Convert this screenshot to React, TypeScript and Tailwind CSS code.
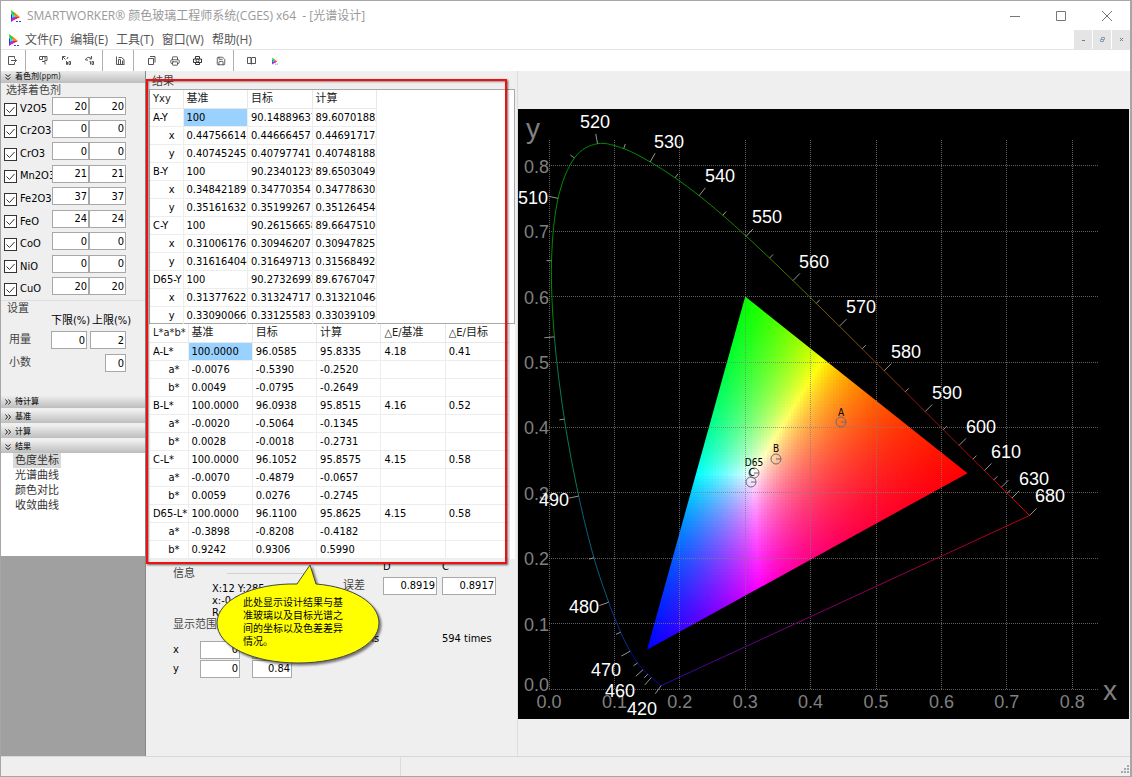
import React from 'react';
import { Printer, Save } from 'lucide-react';

const colorants = [
  { name: 'V2O5', low: '20', high: '20' },
  { name: 'Cr2O3', low: '0', high: '0' },
  { name: 'CrO3', low: '0', high: '0' },
  { name: 'Mn2O3', low: '21', high: '21' },
  { name: 'Fe2O3', low: '37', high: '37' },
  { name: 'FeO', low: '24', high: '24' },
  { name: 'CoO', low: '0', high: '0' },
  { name: 'NiO', low: '0', high: '0' },
  { name: 'CuO', low: '20', high: '20' },
];

const yxyRows = [
  ['A-Y', '100', '90.14889637', '89.60701882'],
  ['x', '0.447566145', '0.44666457', '0.446917178'],
  ['y', '0.407452452', '0.40797741', '0.407481883'],
  ['B-Y', '100', '90.23401239', '89.65030493'],
  ['x', '0.348421893', '0.34770354', '0.347786305'],
  ['y', '0.351616327', '0.35199267', '0.351264546'],
  ['C-Y', '100', '90.26156658', '89.66475106'],
  ['x', '0.310061762', '0.30946207', '0.309478251'],
  ['y', '0.316164044', '0.31649713', '0.315684928'],
  ['D65-Y', '100', '90.27326993', '89.67670479'],
  ['x', '0.313776221', '0.31324717', '0.313210464'],
  ['y', '0.330900661', '0.33125583', '0.330391098'],
];

const labRows = [
  ['A-L*', '100.0000', '96.0585', '95.8335', '4.18', '0.41'],
  ['a*', '-0.0076', '-0.5390', '-0.2520', '', ''],
  ['b*', '0.0049', '-0.0795', '-0.2649', '', ''],
  ['B-L*', '100.0000', '96.0938', '95.8515', '4.16', '0.52'],
  ['a*', '-0.0020', '-0.5064', '-0.1345', '', ''],
  ['b*', '0.0028', '-0.0018', '-0.2731', '', ''],
  ['C-L*', '100.0000', '96.1052', '95.8575', '4.15', '0.58'],
  ['a*', '-0.0070', '-0.4879', '-0.0657', '', ''],
  ['b*', '0.0059', '0.0276', '-0.2745', '', ''],
  ['D65-L*', '100.0000', '96.1100', '95.8625', '4.15', '0.58'],
  ['a*', '-0.3898', '-0.8208', '-0.4182', '', ''],
  ['b*', '0.9242', '0.9306', '0.5990', '', ''],
];

// CIE 1931 spectral locus: wavelength, x, y
const locus: Array<[number, number, number]> = [
  [420, 0.1714, 0.0051], [430, 0.1689, 0.0069], [440, 0.1644, 0.0109], [450, 0.1566, 0.0177],
  [455, 0.151, 0.0227], [460, 0.144, 0.0297], [465, 0.1355, 0.0399], [470, 0.1241, 0.0578],
  [475, 0.1096, 0.0868], [480, 0.0913, 0.1327], [485, 0.0687, 0.2007], [490, 0.0454, 0.295],
  [495, 0.0235, 0.4127], [500, 0.0082, 0.5384], [505, 0.0039, 0.6548], [510, 0.0139, 0.7502],
  [515, 0.0389, 0.812], [520, 0.0743, 0.8338], [525, 0.1142, 0.8262], [530, 0.1547, 0.8059],
  [535, 0.1929, 0.7816], [540, 0.2296, 0.7543], [545, 0.2658, 0.7243], [550, 0.3016, 0.6923],
  [555, 0.3373, 0.6589], [560, 0.3731, 0.6245], [565, 0.4087, 0.5896], [570, 0.4441, 0.5547],
  [575, 0.4788, 0.5202], [580, 0.5125, 0.4866], [585, 0.5448, 0.4544], [590, 0.5752, 0.4242],
  [595, 0.6029, 0.3965], [600, 0.627, 0.3725], [605, 0.6482, 0.3514], [610, 0.6658, 0.334],
  [615, 0.6801, 0.3197], [620, 0.6915, 0.3083], [625, 0.7006, 0.2993], [630, 0.7079, 0.292],
  [680, 0.7347, 0.2653],
];

const waveLabels: Array<[string, number, number]> = [
  ['520', 77, 12], ['530', 151, 32], ['540', 202, 66], ['550', 249, 107], ['560', 296, 152],
  ['570', 343, 197], ['580', 388, 242], ['590', 429, 283], ['600', 463, 317], ['610', 488, 342],
  ['630', 516, 369], ['680', 532, 386], ['510', 15, 88], ['490', 36, 390], ['480', 66, 497],
  ['470', 88, 560], ['460', 102, 581], ['420', 124, 599],
];

const UNIT = 654;
const px = (x: number) => 31 + x * UNIT;
const py = (y: number) => 580 - y * UNIT;

const xyToColor = (x: number, y: number) => {
  const X = x / y;
  const Z = (1 - x - y) / y;
  const rgb = [
    3.2406 * X - 1.5372 - 0.4986 * Z,
    -0.9689 * X + 1.8758 + 0.0415 * Z,
    0.0557 * X - 0.204 + 1.057 * Z,
  ].map((v) => Math.max(0, v));
  const max = Math.max(...rgb);
  return `rgb(${rgb.map((v) => Math.round((v / max) * 255)).join(',')})`;
};

const gamut = [[0.3, 0.6], [0.64, 0.33], [0.15, 0.06]];
const gamutPoints = gamut.map(([x, y]) => `${px(x)},${py(y)}`).join(' ');

const CELL = 3;
const gamutCells: Array<{ x: number; y: number; fill: string }> = [];
for (let cy = 187; cy < 542; cy += CELL) {
  const y = (580 - cy - CELL / 2) / UNIT;
  const left = 0.15 + ((y - 0.06) / 0.54) * 0.15;
  const right = y > 0.33 ? 0.3 + ((0.6 - y) / 0.27) * 0.34 : 0.15 + ((y - 0.06) / 0.27) * 0.49;
  const start = Math.floor(px(left) / CELL) * CELL - 2 * CELL;
  for (let cx = start; cx < px(right) + 2 * CELL; cx += CELL) {
    gamutCells.push({ x: cx, y: cy, fill: xyToColor((cx + CELL / 2 - 31) / UNIT, Math.max(y, 0.01)) });
  }
}

const waveColor = (nm: number) => {
  if (nm < 475) return '#0808a0';
  if (nm < 485) return '#06348e';
  if (nm < 495) return '#08627a';
  if (nm < 505) return '#0a7a50';
  if (nm < 545) return '#008c00';
  if (nm < 560) return '#1f7f00';
  if (nm < 570) return '#4f7000';
  if (nm < 580) return '#7d5600';
  if (nm < 590) return '#8f3400';
  if (nm < 605) return '#961600';
  if (nm < 625) return '#b00a00';
  return '#e00000';
};

const steps = [0, 1, 2, 3, 4, 5, 6, 7, 8];

const markers = [
  { name: 'A', x: 323, y: 313, lx: 323, ly: 307 },
  { name: 'B', x: 258, y: 350, lx: 258, ly: 343 },
  { name: 'D65', x: 236, y: 364, lx: 236, ly: 357 },
  { name: 'C', x: 233, y: 373, lx: 234, ly: 367 },
];

const ChromaticityChart: React.FC = () => (
  <svg
    viewBox="0 0 611 610"
    className="block w-full bg-black font-['Liberation_Sans_Narrow','Liberation_Sans',sans-serif]"
    role="img"
    aria-label="CIE 1931"
  >
    <defs>
      <clipPath id="gamut">
        <polygon points={gamutPoints} />
      </clipPath>
      <linearGradient id="purple" x1="0" x2="1">
        <stop offset="0" stopColor="#2a0aa8" />
        <stop offset="0.35" stopColor="#760078" />
        <stop offset="1" stopColor="#b80010" />
      </linearGradient>
    </defs>
    <g clipPath="url(#gamut)" shapeRendering="crispEdges">
      {gamutCells.map((c) => (
        <rect key={`${c.x}-${c.y}`} x={c.x} y={c.y} width={CELL} height={CELL} fill={c.fill} />
      ))}
    </g>

    {/* Grid */}
    <g stroke="#808080" strokeOpacity="0.75" strokeDasharray="1 1" shapeRendering="crispEdges">
      {steps.map((s) => (
        <React.Fragment key={s}>
          <line x1={px(s / 10)} x2={px(s / 10)} y1="31" y2="580" />
          <line x1="31" x2="580" y1={py(s / 10)} y2={py(s / 10)} />
        </React.Fragment>
      ))}
    </g>

    {/* Axis labels */}
    <g fill="#808080" fontSize="18">
      {steps.map((s) => (
        <React.Fragment key={s}>
          <text x={px(s / 10)} y="599" textAnchor="middle">{`0.${s}`}</text>
          <text x="31" y={s === 0 ? 582 : py(s / 10) + 7} textAnchor="end">{`0.${s}`}</text>
        </React.Fragment>
      ))}
    </g>
    <g fill="#808080" fontSize="28" textAnchor="middle">
      <text x="15" y="29">y</text>
      <text x="592" y="591">x</text>
    </g>

    {/* Spectral locus with its ticks */}
    {locus.slice(1).map(([nm, x, y], i) => {
      const prev = locus[i];
      const before = locus[Math.max(0, i - 1)];
      const next = locus[Math.min(locus.length - 1, i + 2)];
      const c1x = px(prev[1] + (x - before[1]) / 6);
      const c1y = py(prev[2] + (y - before[2]) / 6);
      const c2x = px(x - (next[1] - prev[1]) / 6);
      const c2y = py(y - (next[2] - prev[2]) / 6);
      return (
        <path
          key={nm}
          d={`M${px(prev[1])} ${py(prev[2])}C${c1x} ${c1y} ${c2x} ${c2y} ${px(x)} ${py(y)}`}
          fill="none"
          stroke={waveColor(nm)}
        />
      );
    })}
    <line x1={px(0.1714)} y1={py(0.0051)} x2={px(0.7347)} y2={py(0.2653)} stroke="url(#purple)" />
    <g stroke="#949494">
      {locus.map(([nm, x, y], i) => {
        if (nm === 430 || nm === 440) return null;
        const a = locus[Math.max(0, i - 1)];
        const b = locus[Math.min(locus.length - 1, i + 1)];
        const tx = b[1] - a[1];
        const ty = -(b[2] - a[2]);
        const len = (nm % 10 === 0 ? 10 : 5) / Math.hypot(tx, ty);
        return <line key={nm} x1={px(x)} y1={py(y)} x2={px(x) + ty * len} y2={py(y) - tx * len} />;
      })}
    </g>
    <g fill="#fff" fontSize="18" textAnchor="middle">
      {waveLabels.map(([t, x, y]) => (
        <text key={t} x={x} y={y + 7}>{t}</text>
      ))}
    </g>

    {/* Illuminants */}
    {markers.map((m) => (
      <g key={m.name}>
        <circle cx={m.x} cy={m.y} r="5" fill="none" stroke="#6b6b70" />
        <path d={`M${m.x} ${m.y}h5`} stroke="#6b6b70" />
        <text
          x={m.lx}
          y={m.ly}
          textAnchor="middle"
          className="font-['DejaVu_Sans_Condensed','DejaVu_Sans',sans-serif] text-[10px]"
        >
          {m.name}
        </text>
      </g>
    ))}
  </svg>
);

const Logo: React.FC<{ className: string }> = ({ className }) => (
  <svg viewBox="0 0 14 14" className={className} aria-hidden="true">
    <path d="M2 1l5 4-4 4z" fill="#18d028" />
    <path d="M5 3l6 5-5 1z" fill="#f08a10" />
    <path d="M11 8l-6 3 1-3z" fill="#f01040" />
    <path d="M2 5l4 3-4 5z" fill="#2030f0" />
    <path d="M3 4l3 4-3 1z" fill="#30e0e0" />
    <path d="M3 9l4-1 1 1-6 4z" fill="#c020e0" />
    <path d="M7 12.500h6" stroke="#3848c0" strokeDasharray="2 1" />
  </svg>
);

const ToolButton: React.FC<{ label: string; children: React.ReactNode }> = ({ label, children }) => (
  <button aria-label={label} className="flex h-full w-[23px] items-center justify-center text-[#444]">
    {children}
  </button>
);

const ToolIcon: React.FC<{ d: string }> = ({ d }) => (
  <svg viewBox="0 0 9 9" className="size-[9px]" fill="none" stroke="#555" aria-hidden="true">
    <path d={d} />
  </svg>
);

const ToolSeparator = () => <div className="ml-px mr-1.5 h-full w-px bg-[#b0b0b0]" />;

const NumberBox: React.FC<{ label: string; value: string; className: string }> = ({ label, value, className }) => (
  <input
    aria-label={label}
    defaultValue={value}
    className={`h-[18px] border border-[#a8a8a8] bg-white px-px text-right outline-none ${className}`}
  />
);

const SectionBar: React.FC<{ title: string; open?: boolean }> = ({ title, open }) => (
  <button className="flex h-3 w-full shrink-0 items-center gap-1 bg-linear-to-b from-[#ececec] to-[#bdbdbd] px-1 text-[8px] font-medium leading-none text-[#222]">
    <svg viewBox="0 0 6 6" className={open ? 'size-1.5 rotate-90' : 'size-1.5'} aria-hidden="true">
      <path d="M0.5 0.5l2 2.5-2 2.5M3.5 0.5l2 2.5-2 2.5" fill="none" stroke="#222" />
    </svg>
    {title}
  </button>
);

interface ResultTableProps {
  head: string[];
  rows: string[][];
  firstWidth: string;
  width: string;
}

const ResultTable: React.FC<ResultTableProps> = ({ head, rows, firstWidth, width }) => (
  <table className={`table-fixed border-collapse ${width}`}>
    <thead>
      <tr className="h-[18px]">
        {head.map((h, i) => (
          <th
            key={h}
            scope="col"
            className={`overflow-hidden whitespace-nowrap border-b border-r border-[#e8e8e8] p-0 pl-[3px] text-left font-normal leading-[17px] text-[#222] ${i === 0 ? firstWidth : ''}`}
          >
            {h}
          </th>
        ))}
      </tr>
    </thead>
    <tbody>
      {rows.map((row, r) => (
        <tr key={r} className="h-[18px]">
          {row.map((cell, i) => (
            <td
              key={i}
              className={`overflow-hidden whitespace-nowrap border-b border-r border-[#ededed] p-0 leading-[17px] ${
                i === 0 && r % 3 !== 0 ? 'pr-2 text-right' : 'pl-[3px]'
              } ${r === 0 && i === 1 ? 'bg-[#99d1ff]' : ''}`}
            >
              {cell}
            </td>
          ))}
        </tr>
      ))}
    </tbody>
  </table>
);

const Callout = () => (
  <div className="absolute left-[69px] top-[493px] w-[170px]">
    <svg viewBox="0 0 170 106" className="block w-full drop-shadow-[2px_2px_1px_rgba(0,0,0,0.5)]" aria-hidden="true">
      <path
        d="M95 1l6 19C138 23 164 39 164 59C164 82 128 99 83 99C38 99 2 82 2 59C2 36 38 19 82 20Z"
        fill="#ff0"
        stroke="#444"
      />
    </svg>
    <p className="absolute left-7 top-8 w-[104px] text-[10px] leading-[13px]">
      此处显示设计结果与基准玻璃以及目标光谱之间的坐标以及色差差异情况。
    </p>
  </div>
);

const Sidebar = () => (
  <aside className="flex w-[145px] shrink-0 flex-col border-r border-[#888] bg-[#a0a0a0]">
    <SectionBar title="着色剂(ppm)" open />
    <div className="bg-[#efefef] pb-6">
      <h2 className="pl-[5px] pt-0.5 leading-3 text-[#444]">选择着色剂</h2>
      <div className="grid h-[203px] grid-rows-9">
        {colorants.map((c) => (
          <div key={c.name} className="flex items-start pl-[3px]">
            <label className="flex h-5 w-12 items-center gap-[3px] overflow-hidden pt-1">
              <span className="grid size-[13px] shrink-0">
                <input
                  type="checkbox"
                  defaultChecked
                  className="peer size-[13px] appearance-none border border-[#333] bg-white [grid-area:1/1]"
                />
                <svg
                  viewBox="0 0 13 13"
                  className="pointer-events-none invisible size-[13px] peer-checked:visible [grid-area:1/1]"
                  aria-hidden="true"
                >
                  <path d="M2.500 6.500l3 3 5-5.500" fill="none" stroke="#333" />
                </svg>
              </span>
              {c.name}
            </label>
            <NumberBox label={`${c.name} 下限`} value={c.low} className="w-[37px]" />
            <NumberBox label={`${c.name} 上限`} value={c.high} className="w-[37px]" />
          </div>
        ))}
      </div>
      <h2 className="border-t border-[#dedede] pl-1.5 pt-0.5 leading-3 text-[#444]">设置</h2>
      <div className="grid grid-cols-[50px_39px_36px] items-center gap-y-[5px]">
        <span className="col-start-2 whitespace-nowrap leading-[11px]">下限(%)</span>
        <span className="whitespace-nowrap pl-0.5 leading-[11px]">上限(%)</span>
        <span className="pl-2 text-[#444]">用量</span>
        <NumberBox label="用量下限" value="0" className="w-9" />
        <NumberBox label="用量上限" value="2" className="w-9" />
        <span className="pl-2 text-[#444]">小数</span>
        <NumberBox label="小数" value="0" className="col-start-3 w-[21px] justify-self-end" />
      </div>
    </div>
    <div className="flex flex-col gap-[3px] bg-[#efefef]">
      <SectionBar title="待计算" />
      <SectionBar title="基准" />
      <SectionBar title="计算" />
      <SectionBar title="结果" open />
    </div>
    <ul className="h-[103px] bg-white pl-3 text-[#333]">
      {['色度坐标', '光谱曲线', '颜色对比', '收敛曲线'].map((t, i) => (
        <li key={t} className="h-[15px]">
          <button className={i === 0 ? 'bg-[#d9d9d9] px-0.5 leading-[15px]' : 'px-0.5 leading-[15px]'}>{t}</button>
        </li>
      ))}
    </ul>
  </aside>
);

const InfoPanel = () => (
  <section className="flex pl-6 leading-3">
    <div className="w-[170px] pt-[9px]">
      <div className="flex items-center gap-8 text-[#444]">
        信息
        <span className="h-px w-20 bg-[#d0d0d0]" />
      </div>
      <div className="pl-[39px] pt-[3px]">
        <p>X:12 Y:285</p>
        <p>x:-0.0291</p>
        <p>R:0 G:0</p>
      </div>
      <p className="text-[#444]">显示范围</p>
      <div className="grid grid-cols-[27px_52px_40px] items-center gap-y-px pt-2.5">
        <span>x</span>
        <NumberBox label="x 最小" value="0" className="w-10" />
        <NumberBox label="x 最大" value="0.84" className="w-10" />
        <span>y</span>
        <NumberBox label="y 最小" value="0" className="w-10" />
        <NumberBox label="y 最大" value="0.84" className="w-10" />
      </div>
    </div>
    <div className="grid grid-cols-[40px_59px_54px] content-start items-center pt-0.5">
      <span className="col-start-2">D</span>
      <span>C</span>
      <span className="pt-1 text-[#444]">误差</span>
      <NumberBox label="误差 D" value="0.8919" className="mt-1 w-[54px]" />
      <NumberBox label="误差 C" value="0.8917" className="mt-1 w-[54px]" />
      <span className="pl-3 pt-[38px]">6 ms</span>
      <span className="col-start-3 whitespace-nowrap pt-[38px]">594 times</span>
    </div>
  </section>
);

const App: React.FC = () => {
  return (
    <div className="flex min-h-screen flex-col border border-r-2 border-[#a6a6a6] bg-[#efefef] font-['DejaVu_Sans_Condensed','Noto_Sans_CJK_SC',sans-serif] text-[11px] text-black">
      {/* Title bar */}
      <header className="flex h-[29px] items-center bg-white font-['Open_Sans','Noto_Sans_CJK_SC',sans-serif] text-xs text-[#999]">
        <Logo className="ml-2 mr-1 size-[14px]" />
        <h1 className="flex-1 whitespace-pre">SMARTWORKER® 颜色玻璃工程师系统(CGES) x64  - [光谱设计]</h1>
        <button aria-label="最小化" className="flex w-[46px] justify-center">
          <svg viewBox="0 0 10 10" className="size-2.5"><path d="M0 5.5h10" stroke="#777" /></svg>
        </button>
        <button aria-label="最大化" className="flex w-[46px] justify-center">
          <svg viewBox="0 0 10 10" className="size-2.5"><path d="M.5.5h9v9h-9z" fill="none" stroke="#777" /></svg>
        </button>
        <button aria-label="关闭" className="flex w-[46px] justify-center">
          <svg viewBox="0 0 10 10" className="size-2.5"><path d="M0 0l10 10M10 0L0 10" stroke="#777" /></svg>
        </button>
      </header>

      {/* Menu bar */}
      <nav className="flex h-[19px] items-center bg-white font-['Open_Sans','Noto_Sans_CJK_SC',sans-serif] text-xs leading-none text-[#555]">
        <Logo className="ml-1.5 mr-1 size-3.5" />
        <div className="flex flex-1 gap-2">
          {['文件(F)', '编辑(E)', '工具(T)', '窗口(W)', '帮助(H)'].map((m) => (
            <button key={m}>{m}</button>
          ))}
        </div>
        <div className="flex h-full gap-px">
          <button aria-label="最小化子窗口" className="flex w-[18px] items-center justify-center bg-[#e5e5e5]">
            <svg viewBox="0 0 5 5" className="size-[5px]"><path d="M1 3.5h3" stroke="#69809c" /></svg>
          </button>
          <button aria-label="还原子窗口" className="flex w-[18px] items-center justify-center bg-[#e5e5e5]">
            <svg viewBox="0 0 5 5" className="size-[5px]">
              <path d="M1.5.5h3v2h-3zM.5 2.5h3v2h-3z" fill="none" stroke="#8a9cb4" />
            </svg>
          </button>
          <button aria-label="关闭子窗口" className="flex w-[18px] items-center justify-center bg-[#e5e5e5]">
            <svg viewBox="0 0 5 5" className="size-[5px]"><path d="M1 1l3 3M4 1L1 4" stroke="#69809c" /></svg>
          </button>
        </div>
      </nav>

      {/* Toolbar */}
      <div className="flex h-[22px] items-center border-t border-[#e4e4e4] bg-white">
        <ToolButton label="退出"><ToolIcon d="M6.500 2.500V.5h-6v8h6v-2M3 4.500h5.500M6.500 2.500l2 2-2 2" /></ToolButton>
        <ToolSeparator />
        <ToolButton label="着色剂"><ToolIcon d="M1 .5h7v4H5.500M.5.5v3h3v-3M3 5.500h3v3M6 .5v3" /></ToolButton>
        <ToolButton label="目标"><ToolIcon d="M.5.5l3 3M.5 4V.5h3M5 3l1-2M4.500 5v3.500h1V6M7 8.500h1.500v-3H7z" /></ToolButton>
        <ToolButton label="查找"><ToolIcon d="M.5 4C1 1 5 .5 6.500 3M.5 4h2.500M6.500 0v3h-2M4.500 5.500h1v3M7 8.500h1.500v-3H7z" /></ToolButton>
        <ToolSeparator />
        <ToolButton label="图表"><ToolIcon d="M.5.5v8h8M2.500 8V3.500h2V8M6.500 8V4.500M2.500 1.500h3l2.500 2V8" /></ToolButton>
        <ToolSeparator />
        <ToolButton label="新建"><ToolIcon d="M1.500 2.500v6h5v-6zM3 .5h5v6" /></ToolButton>
        <ToolButton label="打印"><Printer size={10} /></ToolButton>
        <ToolButton label="打印设置">
          <svg viewBox="0 0 9 9" className="size-[9px]" fill="none" stroke="#333" aria-hidden="true">
            <path d="M2.500 3V.5h4V3M.5 3h8v3.500h-8zM2.500 6v2.500h4V6" />
            <circle cx="4.500" cy="4.500" r="1.500" />
          </svg>
        </ToolButton>
        <ToolButton label="保存"><Save size={10} /></ToolButton>
        <ToolSeparator />
        <ToolButton label="帮助"><ToolIcon d="M.5 1.500h3.500v6H.5zM4.500 8.500v-7M5 1.500h3.500v6H5" /></ToolButton>
        <ToolButton label="关于"><Logo className="size-2" /></ToolButton>
      </div>

      <main className="flex flex-1">
        <Sidebar />

        <div className="relative w-[372px] shrink-0 border-r border-[#dcdcdc] pl-[3px]">
          <h2 className="pl-[3px] pt-1 leading-[14px] text-[#444]">结果</h2>
          <div className="mr-0.5 h-[235px] border border-[#a8a8a8] bg-white">
            <ResultTable head={['Yxy', '基准', '目标', '计算']} rows={yxyRows} firstWidth="w-[33px]" width="w-[227px]" />
          </div>
          <div className="mr-0.5 bg-white pl-px">
            <ResultTable
              head={['L*a*b*', '基准', '目标', '计算', '△E/基准', '△E/目标']}
              rows={labRows}
              firstWidth="w-[38px]"
              width="w-[360px]"
            />
          </div>
          <InfoPanel />
          <div className="absolute left-0 top-2 h-[485px] w-[361px] border-2 border-[#f01010] shadow-[1px_1px_2px_rgba(0,0,0,0.6),inset_1px_1px_2px_rgba(0,0,0,0.4)]" />
          <Callout />
        </div>

        <div className="min-w-0 flex-1 pr-px pt-[38px]">
          <ChromaticityChart />
        </div>
      </main>

      {/* Status bar */}
      <footer className="flex h-5 items-end border-t border-[#d8d8d8]">
        <div className="h-full w-[400px] border-r border-[#dcdcdc]" />
        <svg viewBox="0 0 9 9" className="mb-0.5 ml-auto size-[9px]" fill="#a8a8a8" aria-hidden="true">
          <path d="M6 0h2v2H6zM6 3h2v2H6zM6 6h2v2H6zM3 3h2v2H3zM3 6h2v2H3zM0 6h2v2H0z" />
        </svg>
      </footer>
    </div>
  );
};

export default App;
